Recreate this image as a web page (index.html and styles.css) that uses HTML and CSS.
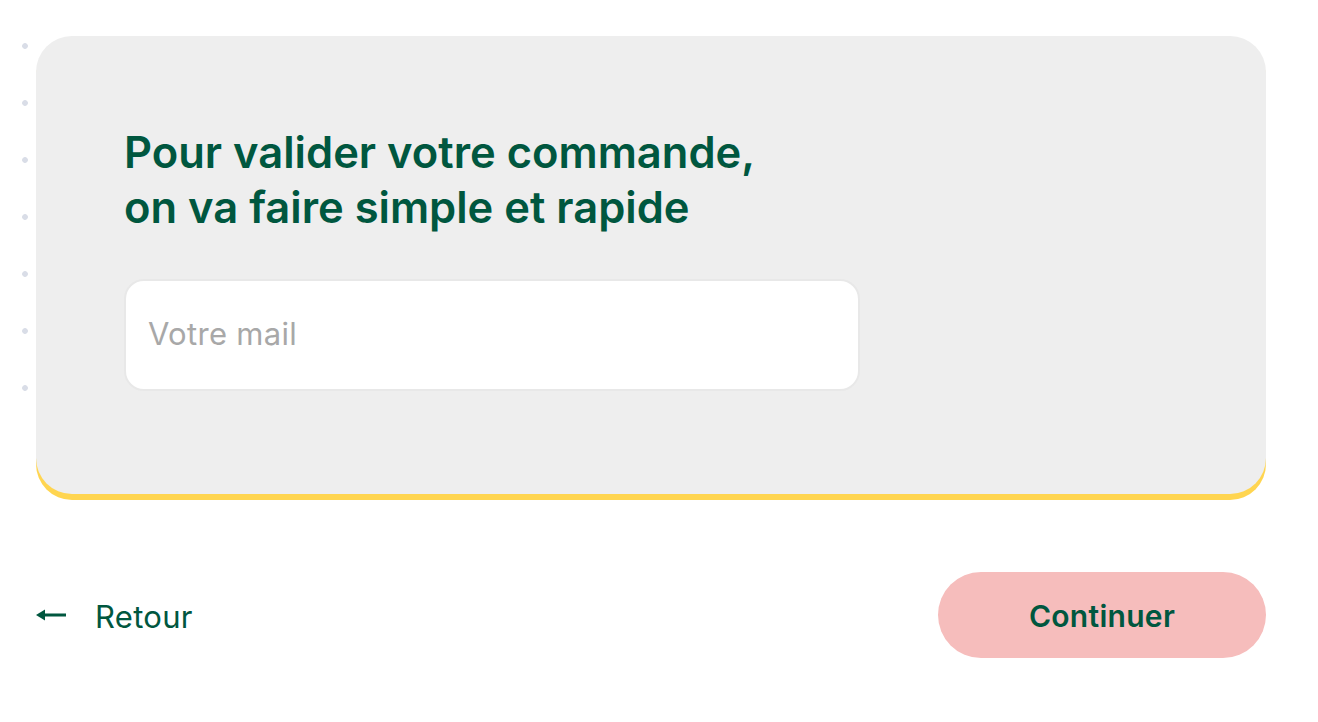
FILE: index.html
```html
<!DOCTYPE html>
<html lang="fr">
  <head>
    <meta name="viewport" content="width=device-width" />
    <title>Valider votre commande</title>
    <link rel="stylesheet" href="styles.css">
  </head>
  <body>
    <main class="page">
      <div class="rail"></div>
      <section class="card">
        <h1 class="card-title">Pour valider votre commande,<br>on va faire simple et rapide</h1>
        <input class="mail-input" type="email" placeholder="Votre mail">
      </section>
      <div class="actions">
        <a class="back-link" href="#">
          <svg class="back-icon" width="30" height="12" viewBox="0 0 30 12" aria-hidden="true">
            <path d="M0 6 L9 0.5 L9 11.5 Z" fill="#00573f" />
            <rect x="7" y="4.5" width="23" height="3" fill="#00573f" />
          </svg>
          <span>Retour</span>
        </a>
        <button class="next-button" type="button">Continuer</button>
      </div>
    </main>
  </body>
</html>
```

FILE: styles.css
```css
body {
  margin: 0;
  background: #ffffff;
  font-family: Inter, "Open Sans", sans-serif;
  color: #00573f;
}

.page {
  display: grid;
  grid-template-columns: 36px 1fr 52px;
  grid-template-rows: 458px auto;
  padding-top: 36px;
}

/* dotted guide on the left edge */
.rail {
  grid-column: 1;
  grid-row: 1;
  height: 399px;
  background-image: radial-gradient(circle at 25px 10px, #d9dde7 2.5px, transparent 3.2px);
  background-size: 36px 57px;
}

.card {
  grid-column: 2;
  grid-row: 1;
  background: #eeeeee;
  border-radius: 36px;
  box-shadow: 0 6px 0 #ffd550;
  padding: 89px 88px 0 88px;
}

.card-title {
  margin: 0;
  font-size: 43.5px;
  line-height: 55px;
  font-weight: 600;
  letter-spacing: 0;
  color: #00573f;
}

.mail-input {
  display: block;
  box-sizing: border-box;
  width: 736px;
  height: 112px;
  margin-top: 44px;
  padding: 0 22px 4px;
  border: 2px solid #e8e8e8;
  border-radius: 20px;
  background: #ffffff;
  font-family: inherit;
  font-size: 31px;
  letter-spacing: 0.3px;
  color: #333333;
  outline: none;
}

.mail-input::placeholder {
  color: #a8a8a8;
}

.actions {
  grid-column: 1 / 3;
  grid-row: 2;
  display: flex;
  align-items: center;
  justify-content: space-between;
  margin-top: 78px;
  padding-left: 36px;
}

.back-link {
  display: flex;
  align-items: center;
  gap: 29px;
  color: #00573f;
  text-decoration: none;
  font-size: 31px;
  letter-spacing: 0.3px;
}

.back-link span {
  padding-top: 3px;
}

.next-button {
  width: 328px;
  height: 86px;
  padding-top: 3px;
  border: none;
  border-radius: 43px;
  background: #f6bdbc;
  color: #00573f;
  font-family: inherit;
  font-size: 30px;
  font-weight: 600;
  letter-spacing: 0.3px;
  cursor: pointer;
}
```
